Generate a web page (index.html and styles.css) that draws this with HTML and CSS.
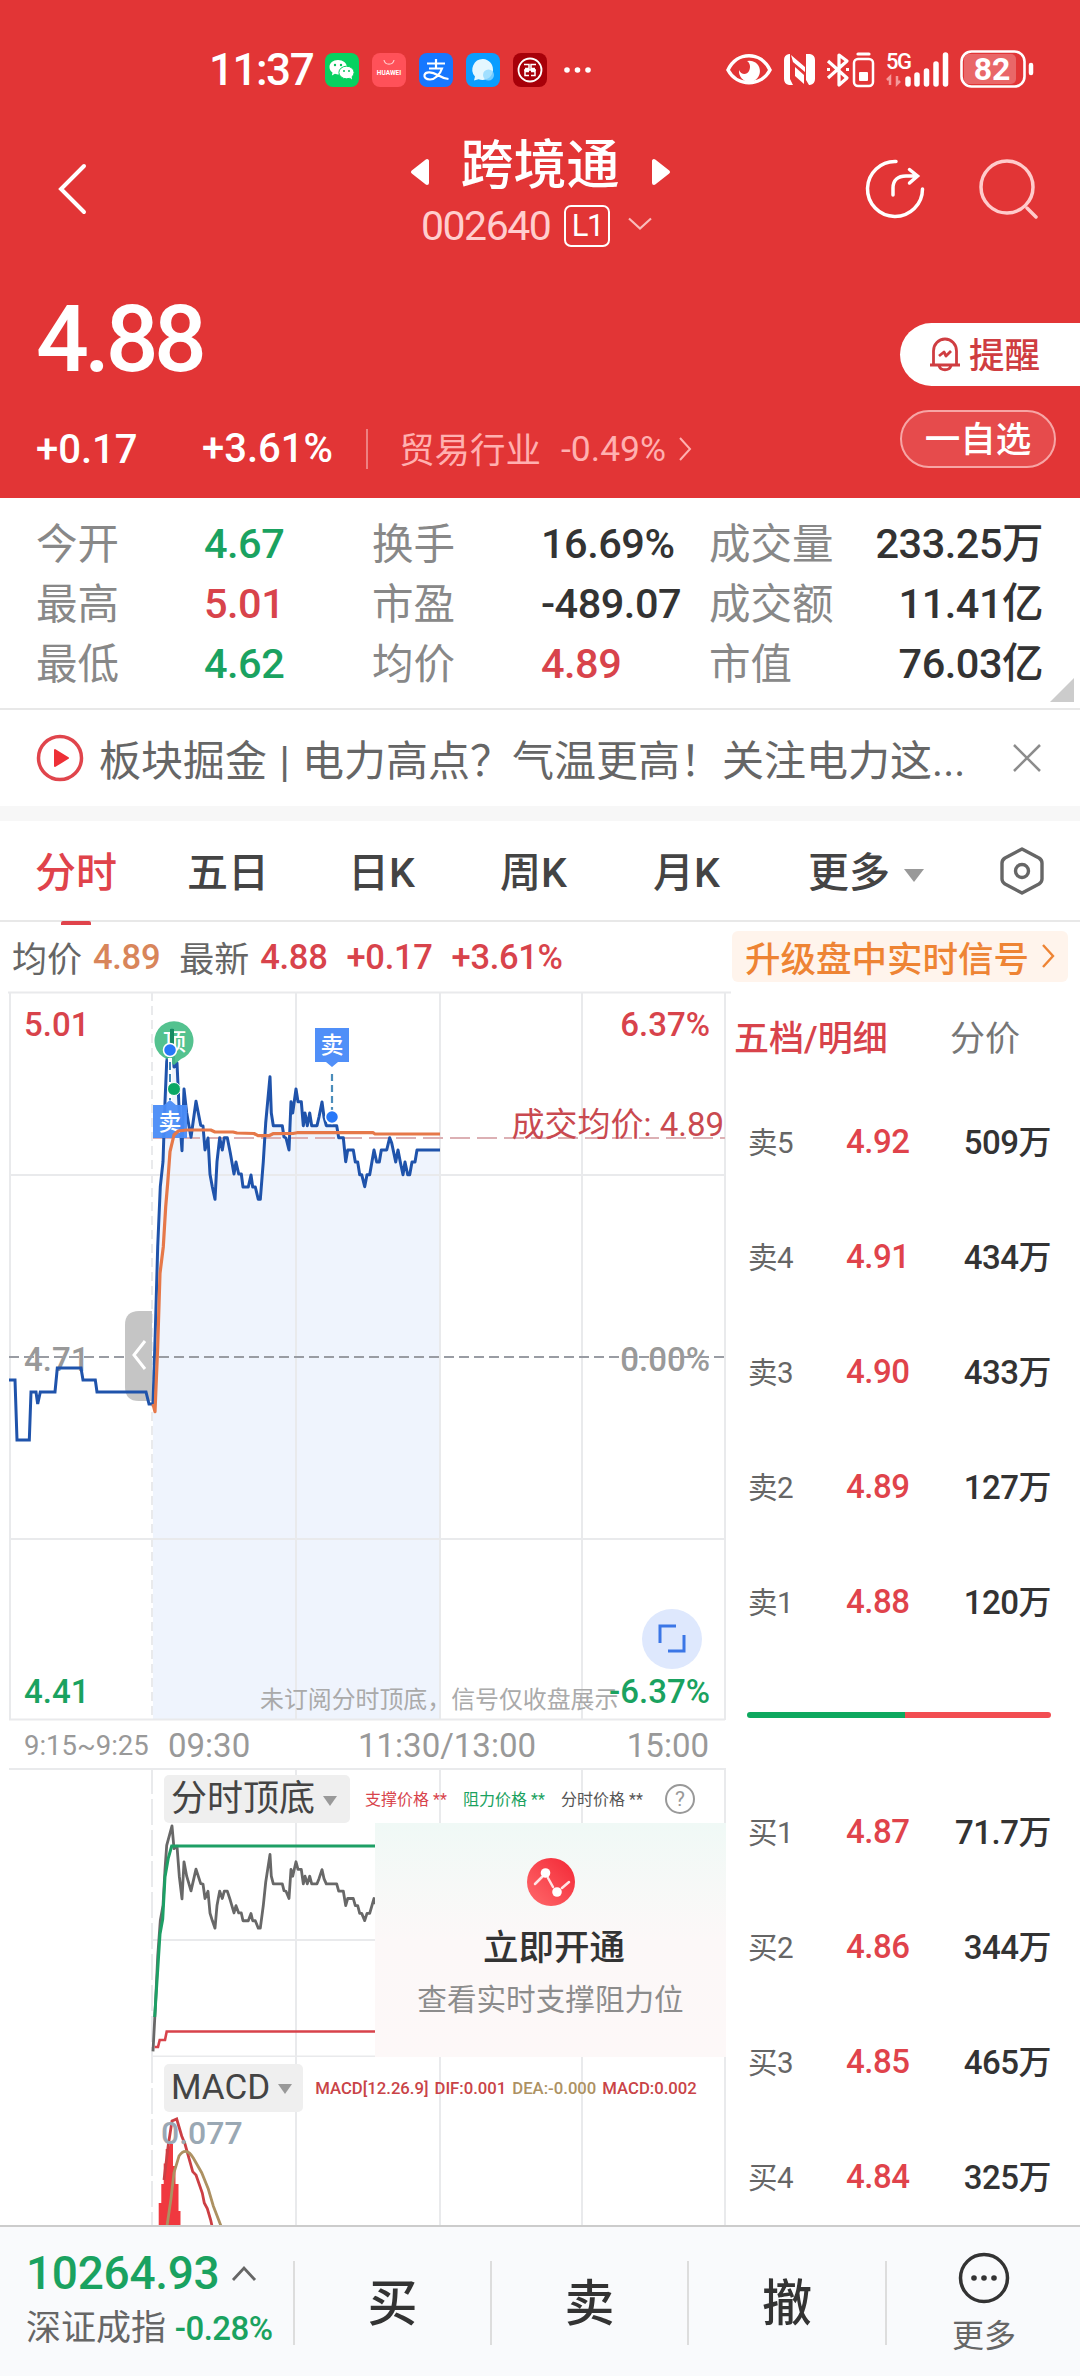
FILE: index.html
```html
<!DOCTYPE html>
<html lang="zh-CN">
<head>
    <meta charset="UTF-8">
    <meta name="viewport" content="width=device-width, initial-scale=1.0">
    <title>跨境通 002640</title>
    <link rel="stylesheet" href="styles.css">
</head>
<body>
    <header class="top">
        <div class="status">
            <span class="clock">11:37</span>
            <div class="apps">
                <svg width="34" height="34" viewBox="0 0 34 34">
                    <rect width="34" height="34" rx="8" fill="#07d160"/>
                    <path d="M13 7c-5 0-8.500 3-8.500 7 0 2.500 1.200 4.200 3 5.500l-.6 3 3-1.700 3 .6c6-.2 9-3.400 9-7.400S18 7 13 7z" fill="#fff"/>
                    <ellipse cx="21.500" cy="19.500" rx="7.600" ry="6.300" fill="#fff" stroke="#07d160"/>
                    <path d="M24 24l3 2.500-.5-4z" fill="#fff"/>
                    <g fill="#07c05c"><circle cx="10" cy="12" r="1.200"/><circle cx="16" cy="12" r="1.200"/><circle cx="19" cy="18" r="1"/><circle cx="24" cy="18" r="1"/></g>
                </svg>
                <svg width="34" height="34" viewBox="0 0 34 34">
                    <rect width="34" height="34" rx="8" fill="#ff5159"/>
                    <path d="M12 7c1 5.500 9 5.500 10 0" fill="none" stroke="#ffc9c9" stroke-width="1.200"/>
                    <text x="17" y="22" class="app-brand">HUAWEI</text>
                </svg>
                <svg width="34" height="34" viewBox="0 0 34 34">
                    <rect width="34" height="34" rx="8" fill="#1677ff"/>
                    <path d="M8 10.500h18M17 6v9M10 15.500h13c-2 6-7 11-12 11-4 0-6-2-5.500-4.500 1-4 8-3 13 0 4 2.300 7 3.500 11 4" fill="none" stroke="#fff" stroke-width="2.200"/>
                </svg>
                <svg width="34" height="34" viewBox="0 0 34 34">
                    <rect width="34" height="34" rx="8" fill="#0a9dff"/>
                    <path d="M17 6a10.500 10.500 0 0 0-8 17.500l-1 4 4.500-1.300A10.500 10.500 0 1 0 17 6z" fill="#e4f7ff"/>
                    <circle cx="22.500" cy="22" r="5.500" fill="#8fd8ff" opacity=".8"/>
                </svg>
                <svg width="34" height="34" viewBox="0 0 34 34">
                    <rect width="34" height="34" rx="8" fill="#a70009"/>
                    <circle cx="17" cy="17" r="11.500" fill="none" stroke="#fff" stroke-width="1.800"/>
                    <path d="M11 11.500h5v4h-4M23 11.500h-5v4h4M16 18.500h-4v4h4M18 18.500h4v4h-4M11 17h12" fill="none" stroke="#fff" stroke-width="1.500"/>
                </svg>
                <svg class="dots" width="27" height="34" viewBox="0 0 27 34" fill="#fff">
                    <circle cx="3" cy="17" r="2.800"/><circle cx="13.500" cy="17" r="2.800"/><circle cx="24" cy="17" r="2.800"/>
                </svg>
            </div>
            <svg class="signals" width="310" height="40" viewBox="726 50 310 40" fill="none" stroke="#fff">
                <path d="M728 70c9-19 33-19 42 0-9 17-33 17-42 0z" stroke-width="3.500"/>
                <path d="M747 61a10.500 10.500 0 1 1-8 9c2 5 8 5 10 1 2-4 1-8-2-10z" fill="#fff" stroke="none"/>
                <path d="M784 60q0-5 5-6h1v25l3 6h-4q-5-1-5-6zM806 54h4q5 1 5 6v19q0 5-5 6h-1l-3-5z" fill="#fff" stroke="none"/>
                <path d="M791 55l14 12v5l-12-10zM795 67l9 8v9l-9-8z" fill="#fff" stroke="none"/>
                <path d="M828 61l19 17-8 7V55l8 6-19 17M827 69.500h3M846 69.500h3" stroke-width="3.200" stroke-linejoin="round"/>
                <rect x="854" y="59" width="19" height="27" rx="4" stroke-width="2.500"/>
                <path d="M858 54h11" stroke-width="3.200" stroke-linecap="round"/>
                <rect x="859" y="72" width="9" height="9" rx="1" fill="#fff" stroke="none"/>
                <text x="886" y="69" class="net">5G</text>
                <path d="M890 85V77l-3 3M897 76v8l3-3" stroke="#f4999a" stroke-width="2.500"/>
                <path d="M908 79v5M917 75v9M926.500 71v13M936 64v20M945.500 55v29" stroke-width="5.500" stroke-linecap="round"/>
                <rect x="964" y="54" width="52" height="30" rx="5" fill="#e96768" stroke="none"/>
                <rect x="961.500" y="51.500" width="63" height="35" rx="10" stroke-width="2.600"/>
                <path d="M1031 65v8" stroke-width="4.500" stroke-linecap="round"/>
                <text x="992" y="80" class="battery">82</text>
            </svg>
        </div>

        <div class="title-bar">
            <svg class="back" width="30" height="52" viewBox="0 0 30 52"><path d="M27 3L4 26l23 23" fill="none" stroke="#fff" stroke-width="4" stroke-linecap="round"/></svg>
            <div class="stock">
                <div class="stock-name">
                    <svg width="20" height="28" viewBox="0 0 20 28"><path d="M17 3v22L3 14z" fill="#fff" stroke="#fff" stroke-width="4" stroke-linejoin="round"/></svg>
                    <h1>跨境通</h1>
                    <svg width="20" height="28" viewBox="0 0 20 28"><path d="M3 3v22l14-11z" fill="#fff" stroke="#fff" stroke-width="4" stroke-linejoin="round"/></svg>
                </div>
                <div class="stock-code">
                    <span>002640</span>
                    <span class="level">L1</span>
                    <svg width="26" height="14" viewBox="0 0 26 14"><path d="M2 1.500l11 10 11-10" fill="none" stroke="#f9bcbc" stroke-width="2.200"/></svg>
                </div>
            </div>
            <div class="actions">
                <svg width="60" height="60" viewBox="0 0 60 60" fill="none" stroke="#fff" stroke-width="3.500" stroke-linecap="round">
                    <path d="M31 2.500A27.500 27.500 0 1 0 57.500 30"/>
                    <path d="M28 36v-7c0-8 5-12 13-12h10M44.500 10.500l8 6.500-8 7"/>
                </svg>
                <svg width="60" height="60" viewBox="0 0 60 60" fill="none" stroke="#ffcbcb" stroke-width="3.500" stroke-linecap="round">
                    <circle cx="29" cy="28" r="26"/><path d="M49 49l9 9"/>
                </svg>
            </div>
        </div>

        <div class="quote">
            <div>
                <div class="price">4.88</div>
                <div class="change">
                    <span class="diff">+0.17</span>
                    <span class="pct">+3.61%</span>
                    <span class="industry">贸易行业</span>
                    <span class="industry-pct">-0.49%</span>
                    <svg width="14" height="26" viewBox="0 0 14 26"><path d="M2 2l10 11L2 24" fill="none" stroke="#ffb0b0" stroke-width="2"/></svg>
                </div>
            </div>
            <div class="quote-buttons">
                <button class="remind">
                    <svg width="34" height="35" viewBox="0 0 34 35" fill="none" stroke="#cf3d41" stroke-width="2.800" stroke-linejoin="round">
                        <path d="M5.500 27V14a11.500 12 0 0 1 23 0v13M2 28h30M11 29c2 5 10 5 12 0M11 19l5-4 2 4 5-5"/>
                    </svg>
                    <span>提醒</span>
                </button>
                <button class="favorite"><span>一自选</span></button>
            </div>
        </div>
    </header>

    <section class="stats">
        <span>今开</span><b class="down">4.67</b><span>换手</span><b>16.69%</b><span>成交量</span><b class="end">233.25万</b>
        <span>最高</span><b class="up">5.01</b><span>市盈</span><b>-489.07</b><span>成交额</span><b class="end">11.41亿</b>
        <span>最低</span><b class="down">4.62</b><span>均价</span><b class="up">4.89</b><span>市值</span><b class="end">76.03亿</b>
        <i class="corner"></i>
    </section>

    <section class="news">
        <svg width="48" height="48" viewBox="0 0 48 48"><circle cx="24" cy="24" r="21.500" fill="none" stroke="#e0454c" stroke-width="3.500"/><path d="M19 16v16l13-8z" fill="#ee3037" stroke="#ee3037" stroke-width="2" stroke-linejoin="round"/></svg>
        <p>板块掘金 | 电力高点？气温更高！关注电力这...</p>
        <svg width="28" height="28" viewBox="0 0 28 28"><path d="M1 1l26 26M27 1L1 27" stroke="#8c8c8c" stroke-width="2.500"/></svg>
    </section>

    <nav class="tabs">
        <a class="active">分时</a>
        <a>五日</a>
        <a>日K</a>
        <a>周K</a>
        <a>月K</a>
        <a>更多<i class="arrow"></i></a>
        <svg width="46" height="48" viewBox="0 0 46 48" fill="none" stroke="#666" stroke-width="3.400" stroke-linejoin="round">
            <path d="M23 2l17 9q3 2 3 5v16q0 3-3 5l-17 9-17-9q-3-2-3-5V16q0-3 3-5z"/><circle cx="23" cy="24" r="6.500"/>
        </svg>
    </nav>

    <div class="summary">
        <span>均价</span><em class="avg">4.89</em>
        <span>最新</span><em>4.88</em><em>+0.17</em><em>+3.61%</em>
        <a class="upgrade">升级盘中实时信号
            <svg width="15" height="26" viewBox="0 0 15 26"><path d="M2 2l10 11L2 24" fill="none" stroke="#ee8434" stroke-width="2.400"/></svg>
        </a>
    </div>

    <main class="board">
        <div class="charts">
            <!-- intraday price -->
            <svg class="chart" width="731" height="730" viewBox="0 991 731 730">
                <path d="M153 1404L155.300 1331.700 157.700 1246.700 160.300 1186.700 163 1161.700 165 1101.700 166.700 1061.700 172 1029.300 174 1067 177 1063 179.300 1113 182 1150.700 184 1089 186.700 1113 191 1137.300 196 1101.300 200.700 1125.300 203 1126 205 1150 208 1138 210 1174.300 212.300 1186.700 215 1199.300 217 1161.700 219.700 1137.700 222.300 1150 224.300 1137.700 227.300 1137.700 230.300 1153 234 1174 236 1162 238.700 1174 241.300 1174 243 1187 248.300 1187 251 1175 252.700 1187 255.300 1187 258.300 1199.300 260.300 1199.300 263.300 1161.700 265.700 1123 270 1076.700 271.300 1113 273.300 1125.700 282.300 1125.700 284 1137 286 1138 289 1150 291 1101.700 292.700 1113 296 1089 298 1101.700 301.300 1101.700 303.300 1125.700 305 1113 307.300 1125.700 309.700 1113 311.700 1125.700 317 1125.700 319 1117 322 1102 324 1117 326.300 1125.700 336.700 1125.700 338.700 1137.700 343.300 1137.700 345.700 1161.700 347.700 1150 353.300 1150 355.300 1162 357.700 1162 359.700 1174.700 361.700 1174.700 364.700 1186.700 367 1174.700 369.700 1174.700 374 1150 376.700 1162 379.300 1162 381.300 1150 386.700 1150 389.700 1137.700 391.700 1143 395.700 1162 398 1150 400.300 1162 403 1174.700 405 1162 407.700 1174.700 409.700 1174.700 412 1162 415 1162 417 1150 440 1150V1719H153z" fill="#eff4fd"/>
                <g class="grid">
                    <path d="M8 992.500H731M10 992V1720M296 992V1720M440 992V1720M582 992V1720M725 992V1720M10 1175H725M10 1539H725M9 1719.500H725"/>
                    <path d="M152 992V1720" stroke-dasharray="9 5"/>
                </g>
                <text x="24" y="1036" class="lab up">5.01</text>
                <text x="710" y="1036" class="lab up right">6.37%</text>
                <text x="24" y="1371" class="lab mute">4.71</text>
                <text x="710" y="1371" class="lab mute right">0.00%</text>
                <text x="24" y="1703" class="lab down">4.41</text>
                <text x="260" y="1708" class="note">未订阅分时顶底，信号仅收盘展示</text>
                <text x="710" y="1703" class="lab down right">-6.37%</text>
                <path d="M9 1357H725" stroke="#999ca3" stroke-width="2" stroke-dasharray="10 5"/>
                <path d="M153 1138H725" stroke="#dcb0b4" stroke-width="2" stroke-dasharray="20 7"/>
                <text x="724" y="1136" class="lab avg-label right">成交均价: 4.89</text>
                <path d="M125 1387V1325q0-14 14-14h13v90h-13q-14 0-14-14z" fill="#c5c5c5"/>
                <path d="M145 1341l-11 14 11 14" fill="none" stroke="#fff" stroke-width="3"/>
                <path d="M9 1380H15L17 1440H29.300L31 1392H36L37.700 1404 40.300 1392H55L57.300 1368H81L83 1380H95.300L97 1392H146L149 1404H153" class="line-price"/>
                <path id="price-line" vector-effect="non-scaling-stroke" d="M153 1404L155.300 1331.700 157.700 1246.700 160.300 1186.700 163 1161.700 165 1101.700 166.700 1061.700 172 1029.300 174 1067 177 1063 179.300 1113 182 1150.700 184 1089 186.700 1113 191 1137.300 196 1101.300 200.700 1125.300 203 1126 205 1150 208 1138 210 1174.300 212.300 1186.700 215 1199.300 217 1161.700 219.700 1137.700 222.300 1150 224.300 1137.700 227.300 1137.700 230.300 1153 234 1174 236 1162 238.700 1174 241.300 1174 243 1187 248.300 1187 251 1175 252.700 1187 255.300 1187 258.300 1199.300 260.300 1199.300 263.300 1161.700 265.700 1123 270 1076.700 271.300 1113 273.300 1125.700 282.300 1125.700 284 1137 286 1138 289 1150 291 1101.700 292.700 1113 296 1089 298 1101.700 301.300 1101.700 303.300 1125.700 305 1113 307.300 1125.700 309.700 1113 311.700 1125.700 317 1125.700 319 1117 322 1102 324 1117 326.300 1125.700 336.700 1125.700 338.700 1137.700 343.300 1137.700 345.700 1161.700 347.700 1150 353.300 1150 355.300 1162 357.700 1162 359.700 1174.700 361.700 1174.700 364.700 1186.700 367 1174.700 369.700 1174.700 374 1150 376.700 1162 379.300 1162 381.300 1150 386.700 1150 389.700 1137.700 391.700 1143 395.700 1162 398 1150 400.300 1162 403 1174.700 405 1162 407.700 1174.700 409.700 1174.700 412 1162 415 1162 417 1150 440 1150" fill="none" stroke-linejoin="round"/>
                <use href="#price-line" class="line-price"/>
                <!-- trade marks -->
                <path d="M174 1065l-7-6a19.500 19.500 0 1 1 14 0z" fill="#45bd85" opacity=".92"/>
                <text x="174.500" y="1050" class="mark">顶</text>
                <path d="M172 1029v20" stroke="#178a63" stroke-width="4"/>
                <path d="M170 1058v44" stroke="#fff" stroke-width="4"/>
                <path d="M170 1062v38" stroke="#3f86b8" stroke-width="2" stroke-dasharray="8 4"/>
                <circle cx="170" cy="1050" r="6.500" fill="#2878f8" stroke="#fff" stroke-width="1.500"/>
                <circle cx="174" cy="1089" r="6.500" fill="#0aa864" stroke="#fff" stroke-width="1"/>
                <path d="M153 1105h11l6-5 6 5h11v33h-34z" fill="#4a8cf7" opacity=".95"/>
                <text x="170" y="1130" class="mark">卖</text>
                <path d="M315 1028h34v34h-11l-6 5-6-5h-11z" fill="#508ff8"/>
                <text x="332" y="1053" class="mark">卖</text>
                <path d="M332 1074v38" stroke="#4a8cba" stroke-width="2.200" stroke-dasharray="7 4"/>
                <circle cx="332" cy="1117" r="6.500" fill="#2878f8" stroke="#fff" stroke-width="1.500"/>
                <path d="M153 1404L155 1411.700 157.700 1346.700 160 1273.300 163.300 1246.700 165.700 1206.700 167.700 1183 170 1151.700 174 1135 178.300 1131 186.700 1130H210.700L215 1132H233L237 1133 254 1133.500 258 1135.700H269L273 1133.700 293 1133.500 297 1132.700H373L375 1134H440" fill="none" stroke="#e67849" stroke-width="3.200" stroke-linejoin="round"/>
                <circle cx="672" cy="1639" r="30" fill="#dee8fd"/>
                <path d="M660 1643v-17h16M668 1651h16v-16" fill="none" stroke="#3b76e6" stroke-width="3"/>
            </svg>

            <div class="axis">
                <span>9:15~9:25</span><span>09:30</span><span>11:30/13:00</span><span>15:00</span>
            </div>

            <div class="panel">
                <svg class="chart" width="731" height="289" viewBox="0 1768 731 289">
                    <g class="grid">
                        <path d="M9 1769H725M296 1768V2057M440 1768V2057M582 1768V2057M725 1768V2057M152 1940H725M152 2056.500H725"/>
                        <path d="M152 1768V2057" stroke-dasharray="26 5"/>
                    </g>
                    <use href="#price-line" stroke="#686868" stroke-width="2.800" transform="translate(0 1206.200) scale(1 .602)"/>
                    <path d="M154.700 2017L157.500 1973 160 1934 162.700 1919 165 1877 168.300 1858 171.700 1846H380" fill="none" stroke="#1d9f65" stroke-width="3"/>
                    <path d="M154.700 2047H158L159.700 2040H165L166.700 2031.500H380" fill="none" stroke="#d8434b" stroke-width="2.600"/>
                </svg>
                <div class="panel-head">
                    <span class="chip">分时顶底<i class="arrow"></i></span>
                    <span class="legend support">支撑价格 **</span>
                    <span class="legend resist">阻力价格 **</span>
                    <span class="legend">分时价格 **</span>
                    <span class="help">?</span>
                </div>
                <div class="unlock">
                    <svg width="48" height="48" viewBox="0 0 48 48">
                        <defs><linearGradient id="red" x1="0" y1="1" x2="1" y2="0"><stop offset="0" stop-color="#ff6a6c"/><stop offset="1" stop-color="#f32735"/></linearGradient></defs>
                        <circle cx="24" cy="24" r="24" fill="url(#red)"/>
                        <path d="M8 26l7-7M21 20l5 9M35 30l7-6" stroke="#ffe4e4" stroke-width="2.500" stroke-linecap="round"/>
                        <circle cx="18.500" cy="15" r="4.800" fill="#fff"/><circle cx="30" cy="34" r="4.800" fill="#fff"/>
                    </svg>
                    <strong>立即开通</strong>
                    <p>查看实时支撑阻力位</p>
                </div>
            </div>

            <div class="panel macd">
                <svg class="chart" width="731" height="168" viewBox="0 2057 731 168">
                    <g class="grid">
                        <path d="M296 2057V2225M440 2057V2225M582 2057V2225M725 2057V2225"/>
                        <path d="M152 2057V2225" stroke-dasharray="26 5"/>
                    </g>
                    <path d="M158.700 2225V2203h2.600V2184h2.400V2163.500h2V2149h2.600L170 2144h3V2166h2.500V2184h3V2211h2V2225z" fill="#f0383f"/>
                    <path d="M164 2180L168.300 2145 172 2121 176.700 2119 181.700 2136 185 2144 192.700 2171.600 196 2175 202.300 2193 204.300 2203 207.300 2208.600 210.700 2220 212 2226" fill="none" stroke="#cc3f44" stroke-width="2.800"/>
                    <path d="M167 2226L171 2198.600 174 2172.700 179 2156Q186 2146 193.300 2158L201.700 2172.700 208.300 2189 213.300 2206 221 2226" fill="none" stroke="#ad9162" stroke-width="2.800"/>
                    <text x="161" y="2144" class="peak">0.077</text>
                </svg>
                <div class="panel-head">
                    <span class="chip">MACD<i class="arrow"></i></span>
                    <span class="value">MACD[12.26.9]</span><span class="value">DIF:0.001</span><span class="value dea">DEA:-0.000</span><span class="value">MACD:0.002</span>
                </div>
            </div>
        </div>

        <aside class="depth">
            <div class="depth-tabs"><span class="active">五档/明细</span><span>分价</span></div>
            <div class="row"><span>卖5</span><b>4.92</b><i>509万</i></div>
            <div class="row"><span>卖4</span><b>4.91</b><i>434万</i></div>
            <div class="row"><span>卖3</span><b>4.90</b><i>433万</i></div>
            <div class="row"><span>卖2</span><b>4.89</b><i>127万</i></div>
            <div class="row"><span>卖1</span><b>4.88</b><i>120万</i></div>
            <div class="ratio"><div></div></div>
            <div class="row"><span>买1</span><b>4.87</b><i>71.7万</i></div>
            <div class="row"><span>买2</span><b>4.86</b><i>344万</i></div>
            <div class="row"><span>买3</span><b>4.85</b><i>465万</i></div>
            <div class="row"><span>买4</span><b>4.84</b><i>325万</i></div>
        </aside>
    </main>

    <footer class="bottom">
        <div class="index">
            <div class="index-value">10264.93 <svg width="26" height="16" viewBox="0 0 26 16"><path d="M2 15L13 3l11 12" fill="none" stroke="#666" stroke-width="2.800"/></svg></div>
            <div class="index-name">深证成指 <span>-0.28%</span></div>
        </div>
        <a>买</a>
        <a>卖</a>
        <a>撤</a>
        <div class="more">
            <svg width="52" height="52" viewBox="0 0 52 52"><circle cx="26" cy="26" r="23.500" fill="none" stroke="#333" stroke-width="3.500"/><g fill="#333"><circle cx="16" cy="26" r="2.800"/><circle cx="26" cy="26" r="2.800"/><circle cx="36" cy="26" r="2.800"/></g></svg>
            更多
        </div>
    </footer>
</body>
</html>
```

FILE: styles.css
```css
* {
    box-sizing: border-box;
}
body {
    margin: 0;
    width: 1080px;
    height: 2376px;
    overflow: hidden;
    display: flex;
    flex-direction: column;
    background-color: #fff;
    color: #333;
    font-family: Roboto, "Noto Sans CJK SC", sans-serif;
}
h1, p {
    margin: 0;
    font-weight: normal;
}
b, i, em {
    font-weight: normal;
    font-style: normal;
}
svg {
    display: block;
    flex-shrink: 0;
}
.up {
    color: #d8434b;
    fill: #d8434b;
}
.down {
    color: #1aa260;
    fill: #1aa260;
}

/* header */
.top {
    height: 498px;
    background-color: #e23536;
    color: #fff;
}
.status {
    height: 130px;
    padding: 50px 44px 0 209px;
    display: flex;
    align-items: flex-start;
}
.clock {
    width: 116px;
    font-size: 44px;
    line-height: 41px;
    letter-spacing: -1.500px;
    font-weight: 500;
}
.apps {
    display: flex;
    gap: 13px;
    padding-top: 3px;
}
.app-brand {
    font-size: 6.500px;
    font-weight: bold;
    fill: #fff;
    text-anchor: middle;
}
.apps .dots {
    margin-left: 4px;
}
.signals {
    margin-left: auto;
}
.net {
    font-size: 22px;
    font-weight: 500;
    fill: #fff;
    stroke: none;
    letter-spacing: -1.500px;
}
.battery {
    font-size: 32px;
    font-weight: bold;
    fill: #fff;
    stroke: none;
    text-anchor: middle;
}
.title-bar {
    height: 150px;
    padding: 0 42px 0 57px;
    display: grid;
    grid-template-columns: 287px 392px 1fr;
}
.back {
    margin-top: 33px;
}
.stock-name {
    display: flex;
    justify-content: center;
    align-items: center;
    gap: 31px;
    height: 67px;
}
.stock-name svg {
    margin-top: 17px;
}
.stock-name h1 {
    padding-top: 5px;
    font-size: 53px;
    font-weight: 500;
    line-height: 67px;
}
.stock-code {
    display: flex;
    align-items: center;
    padding-left: 77px;
    height: 54px;
    font-size: 41px;
    letter-spacing: -1.500px;
    line-height: 50px;
    color: #ffcece;
}
.stock-code > span:first-child {
    padding-top: 4px;
}
.level {
    width: 46px;
    height: 42px;
    margin: 4px 17px 0 14px;
    border: 2px solid #fff;
    border-radius: 7px;
    font-size: 31px;
    line-height: 38px;
    text-align: center;
    color: #fff;
}
.actions {
    display: flex;
    justify-content: flex-end;
    gap: 53px;
    padding-top: 29px;
}
.quote {
    display: flex;
    justify-content: space-between;
    height: 218px;
    padding-left: 36px;
}
.price {
    margin-top: 5px;
    font-size: 93px;
    font-weight: 500;
    line-height: 110px;
    letter-spacing: -4.500px;
}
.change {
    display: flex;
    align-items: center;
    height: 44px;
    margin-top: 32px;
    font-size: 40px;
    font-weight: 500;
}
.diff {
    width: 166px;
}
.pct {
    width: 166px;
    line-height: 40px;
    border-right: 2px solid #ee8182;
}
.industry {
    margin: -3px 20px 0 31px;
    font-size: 35.500px;
    font-weight: 400;
    color: #ffb0b0;
}
.industry-pct {
    margin-right: 12px;
    font-size: 35.500px;
    font-weight: 400;
    color: #ffb0b0;
}
.quote-buttons {
    width: 180px;
    padding-top: 43px;
}
.quote-buttons button {
    display: flex;
    align-items: center;
    border: none;
    padding: 0;
    font-family: inherit;
    font-size: 35.500px;
    font-weight: 500;
}
.quote-buttons span {
    padding-bottom: 5px;
}
.quote-buttons .remind {
    width: 180px;
    height: 63px;
    padding-left: 28px;
    gap: 7px;
    border-radius: 32px 0 0 32px;
    background-color: #fff;
    color: #cf3d41;
}
.quote-buttons .favorite {
    justify-content: center;
    width: 156px;
    height: 58px;
    margin-top: 24px;
    border: 2px solid #f7a5a5;
    border-radius: 29px;
    background-color: #e64b4c;
    color: #fff;
}

/* key figures */
.stats {
    position: relative;
    display: grid;
    grid-template-columns: 168px 168px 169px 168px 1fr 190px;
    grid-auto-rows: 60px;
    align-items: center;
    height: 212px;
    padding: 14px 37px 0 36px;
    border-bottom: 2px solid #e8e8e8;
    font-size: 41.500px;
    white-space: nowrap;
}
.stats span {
    padding-bottom: 3px;
    color: #888;
}
.stats b {
    padding-top: 3px;
    font-weight: 500;
    letter-spacing: -.500px;
}
.stats .end {
    padding: 0 0 4px;
    justify-self: end;
}
.corner {
    position: absolute;
    right: 6px;
    bottom: 6px;
    border-left: 24px solid transparent;
    border-bottom: 24px solid #ccc;
}
.news {
    display: flex;
    align-items: center;
    height: 111px;
    padding: 0 39px 0 36px;
    border-bottom: 15px solid #f7f7f7;
    font-size: 42px;
    color: #666;
}
.news p {
    flex: 1;
    padding: 0 0 2px 15px;
    word-spacing: 2px;
    white-space: nowrap;
}

/* period tabs */
.tabs {
    display: grid;
    grid-template-columns: 152px 161px 152px 153px 155px 191px 46px;
    height: 101px;
    padding-left: 35px;
    border-bottom: 2px solid #e8e8e8;
    font-size: 41px;
    line-height: 104px;
    color: #444;
}
.tabs a {
    font-weight: 500;
}
.tabs svg {
    margin-top: 26px;
}
.tabs .active {
    position: relative;
    color: #e0434b;
}
.tabs .active::after {
    content: "";
    position: absolute;
    left: 26px;
    bottom: 0;
    width: 30px;
    height: 4px;
    border-radius: 2px 2px 0 0;
    background-color: #e0434b;
}
.arrow {
    display: inline-block;
    border: 10px solid transparent;
    border-top: 13px solid #999;
    border-bottom: none;
    margin-left: 14px;
    vertical-align: 5px;
}
.summary {
    display: flex;
    align-items: center;
    height: 69px;
    padding: 0 12px;
    font-size: 35px;
    white-space: nowrap;
}
.summary span {
    color: #666;
    margin-right: 11px;
}
.summary em {
    color: #d8434b;
    margin-right: 19px;
    font-size: 34.500px;
    font-weight: 500;
    letter-spacing: -.300px;
}
.summary .avg {
    color: #d8855a;
}
.upgrade {
    display: flex;
    align-items: center;
    justify-content: space-between;
    width: 336px;
    height: 51px;
    margin-left: auto;
    padding: 0 12px 1px 13px;
    border-radius: 6px;
    background-color: #fff4ec;
    color: #ee8434;
    font-size: 35.500px;
    font-weight: 500;
}

/* charts */
.board {
    display: flex;
    height: 1234px;
}
.charts {
    width: 731px;
}
.grid {
    fill: none;
    stroke: #e9eaec;
    stroke-width: 2px;
}
.line-price {
    fill: none;
    stroke: #1f53ab;
    stroke-width: 3px;
}
.lab {
    font-size: 33px;
    font-weight: 500;
}
.mute {
    fill: #999;
}
.right {
    text-anchor: end;
}
.note {
    font-size: 23.900px;
    fill: #aaa;
}
.avg-label {
    font-weight: 400;
    fill: #c94950;
}
.mark {
    font-size: 23px;
    font-weight: 500;
    fill: #fff;
    text-anchor: middle;
}
.axis {
    display: grid;
    grid-template-columns: 144px 189px 1fr auto;
    align-items: center;
    height: 47px;
    padding: 1px 22px 0 24px;
    font-size: 33px;
    color: #999;
}
.axis span:first-child {
    font-size: 27.500px;
}
.axis span:nth-child(3) {
    padding-left: 1px;
}
.panel {
    position: relative;
    height: 289px;
}
.macd {
    height: 168px;
}
.panel-head {
    position: absolute;
    left: 164px;
    top: 7px;
    display: flex;
    align-items: center;
    white-space: nowrap;
}
.chip {
    height: 48px;
    margin-right: 15px;
    padding: 0 13px 0 7px;
    border-radius: 5px;
    background-color: #efefef;
    font-size: 36px;
    line-height: 48px;
    color: #444;
}
.chip .arrow {
    border-width: 10px 7px 0;
    margin-left: 8px;
}
.legend {
    width: 98px;
    padding-bottom: 2px;
    font-size: 16px;
    color: #555;
}
.support {
    color: #d8434b;
}
.resist {
    color: #1aa260;
}
.help {
    width: 30px;
    height: 30px;
    margin-left: 6px;
    border: 2px solid #999;
    border-radius: 15px;
    font-size: 21px;
    line-height: 27px;
    text-align: center;
    color: #999;
}
.unlock {
    position: absolute;
    left: 375px;
    top: 55px;
    width: 351px;
    height: 234px;
    display: flex;
    flex-direction: column;
    align-items: center;
    padding-top: 35px;
    background-image: linear-gradient(#f0f9f6, #fcf8f8 50%, #fdf8f8);
}
.unlock strong {
    margin: 16px 0 0 7px;
    font-size: 35.500px;
    font-weight: 500;
    line-height: 52px;
}
.unlock p {
    margin-top: 4px;
    font-size: 29.600px;
    line-height: 44px;
    color: #8c8c8c;
}
.macd .chip {
    padding-right: 11px;
    margin-right: 12px;
    font-size: 35px;
}
.value {
    margin-right: 6px;
    font-size: 16.700px;
    font-weight: 500;
    color: #c94347;
}
.dea {
    color: #ad9162;
}
.peak {
    font-size: 32px;
    font-weight: 500;
    fill: #9aa8b4;
}

/* order book */
.depth {
    flex: 1;
    padding: 0 29px 0 3px;
}
.depth-tabs {
    display: flex;
    justify-content: space-between;
    height: 92px;
    padding-right: 31px;
    font-size: 35px;
    line-height: 98px;
    color: #777;
}
.depth-tabs .active {
    font-weight: 500;
    color: #d8434b;
}
.row {
    display: grid;
    grid-template-columns: 98px 80px 1fr;
    align-items: center;
    height: 115px;
    padding-left: 14px;
    font-size: 33px;
    letter-spacing: -.500px;
}
.row span {
    padding-bottom: 2px;
    font-size: 29.500px;
    color: #666;
}
.row b {
    padding-top: 1px;
    font-weight: 500;
    color: #e0434b;
}
.row i {
    padding-bottom: 2px;
    text-align: right;
    font-weight: 500;
}
.ratio {
    display: flex;
    align-items: center;
    height: 115px;
    padding: 0 0 1px 13px;
}
.ratio div {
    flex: 1;
    height: 6px;
    border-radius: 3px;
    background-image: linear-gradient(90deg, #0ea85f 52%, #f24d52 52%);
}

/* trade bar */
.bottom {
    display: grid;
    grid-template-columns: 295px 197px 197px 198px 194px;
    flex: 1;
    padding-top: 34px;
    border-top: 2px solid #ccc;
    background-color: #f9fafc;
}
.bottom > a, .index {
    height: 84px;
    border-right: 2px solid #ddd;
}
.bottom > a {
    font-size: 50px;
    font-weight: 500;
    line-height: 86px;
    text-align: center;
}
.index {
    padding-left: 26px;
    white-space: nowrap;
}
.index-value {
    display: flex;
    align-items: center;
    gap: 12px;
    margin-top: -13px;
    font-size: 46px;
    font-weight: 500;
    line-height: 50px;
    letter-spacing: -.300px;
    color: #1aa260;
}
.index-name {
    margin-top: 6px;
    font-size: 35px;
    line-height: 50px;
    color: #666;
}
.index-name span {
    font-size: 33px;
    font-weight: 500;
    letter-spacing: -.500px;
    color: #1aa260;
}
.more {
    display: flex;
    flex-direction: column;
    align-items: center;
    margin-top: -9px;
    font-size: 32px;
    line-height: 60px;
    color: #666;
}
.more svg {
    margin-bottom: 2px;
}
```
